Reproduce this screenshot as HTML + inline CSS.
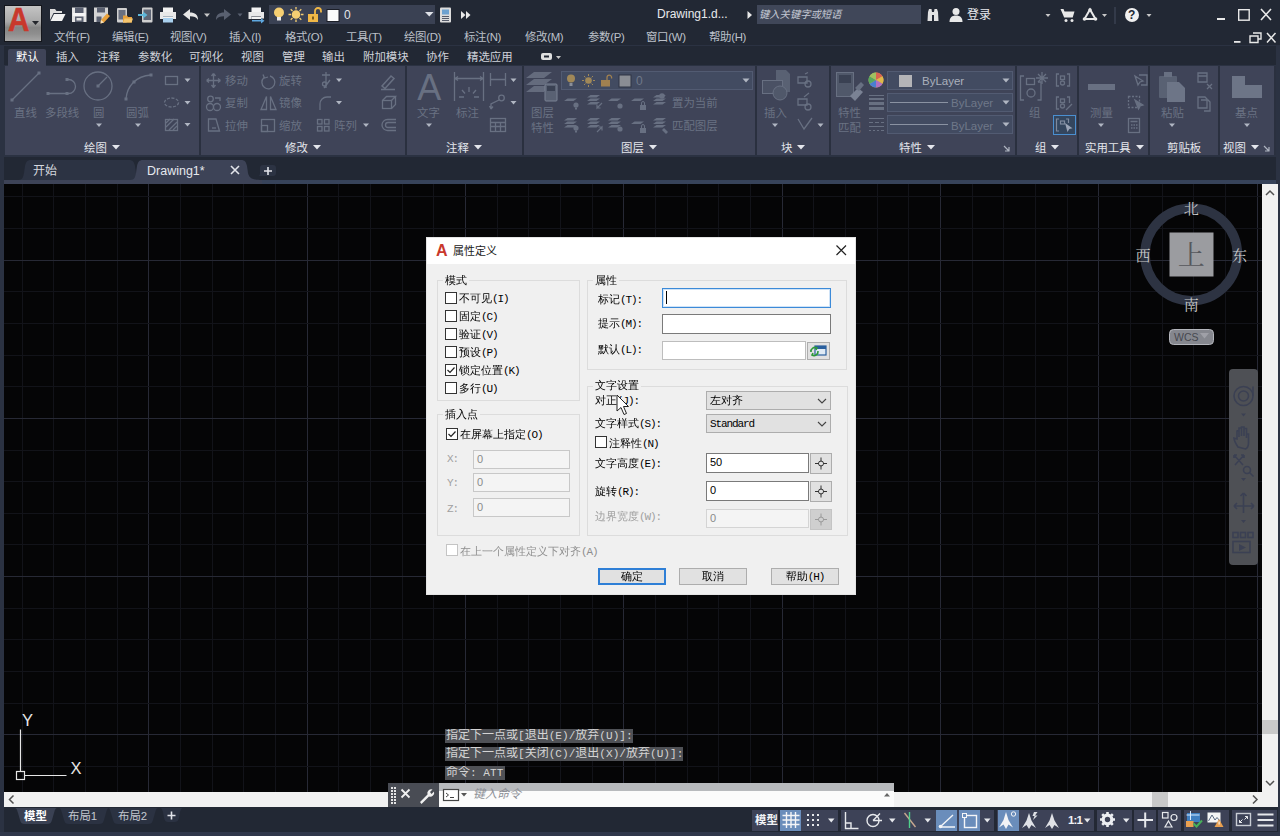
<!DOCTYPE html>
<html lang="zh-CN">
<head>
<meta charset="utf-8">
<title>Drawing1.dwg</title>
<style>
*{box-sizing:border-box;margin:0;padding:0}
html,body{width:1280px;height:836px;overflow:hidden;background:#222834}
body{position:relative;font-family:"Liberation Sans","Noto Sans CJK SC",sans-serif;font-size:12px;color:#e6e8ee;line-height:1}
.a{position:absolute}
.t{position:absolute;white-space:nowrap;line-height:14px;height:14px}
svg{position:absolute;overflow:visible}
#top{left:0;top:0;width:1280px;height:184px;background:#222834}
#ribbon{left:5px;top:66px;width:1270px;height:89px;background:#3f4458}
.pdiv{position:absolute;top:66px;width:2px;height:89px;background:#2a303f}
.ptitle{position:absolute;top:141px;height:14px;line-height:14px;font-size:11.4px;color:#e4e6ec;white-space:nowrap}
.dim{color:#6a7283;font-size:11.4px}
.menu{top:30px;font-size:11.4px;color:#bcc0c9;letter-spacing:-0.3px}
.rtab{top:50px;font-size:11.4px;color:#d0d3da}
#canvas{left:4px;top:184px;width:1258px;height:608px;background:#050506;overflow:hidden}
#dlg{left:426px;top:237px;width:430px;height:358px;background:#f0f0f0;border:1px solid #e4e4e4;color:#000;font-family:"Liberation Sans","WenQuanYi Zen Hei","Noto Sans CJK SC",sans-serif;font-size:11px}
#dlg .t{color:#000;font-size:11px}
.grp{position:absolute;border:1px solid #dcdcdc}
.cb{position:absolute;width:12px;height:12px;border:1px solid #333;background:#fff}
.inp{position:absolute;background:#fff;border:1px solid #7a7a7a;font-family:"Liberation Sans",sans-serif;font-size:11px;color:#000;padding:1px 0 0 3px;line-height:14px}
.btn{position:absolute;background:#e1e1e1;border:1px solid #adadad;text-align:center;font-size:11px;line-height:15px}
.l{font-family:"Liberation Mono",monospace;letter-spacing:-1.1px;font-size:11px}
.cmd{background:#4f5156;color:#d4d4d4;font-family:"Liberation Mono","Noto Sans CJK SC",monospace;font-size:12px;line-height:14px;white-space:nowrap;overflow:hidden;padding-left:1px}
.cl{font-size:11.1px}
</style>
</head>
<body>
<div id="top" class="a"></div>
<!-- window frame tint -->
<div class="a" style="left:0;top:45px;width:1280px;height:139px;background:#2b3242"></div>
<div class="a" style="left:4px;top:46px;width:1272px;height:19px;background:#222834"></div>
<div class="a" style="left:4px;top:157px;width:1272px;height:27px;background:#222834"></div>
<!-- app button -->
<div class="a" style="left:4px;top:5px;width:38px;height:37px;background:linear-gradient(#c4c4c4 0%,#a9a9a9 45%,#858585 62%,#8f8f8f 80%,#a5a5a5 100%);border:1px solid #14161c"></div>
<div class="t" style="left:8px;top:1.5px;height:34px;line-height:34px;font-size:34px;font-weight:bold;color:#c9382c;-webkit-text-stroke:0.6px #c9382c;font-family:'Liberation Sans',sans-serif;transform:scaleX(.87);transform-origin:left">A</div>
<svg style="left:32px;top:21px" width="8" height="5" viewBox="0 0 8 5"><path d="M0 0h7l-3.500 4z" fill="#23252b"/></svg>
<!-- QAT icons -->
<svg style="left:49px;top:7px" width="220" height="16" viewBox="0 0 220 16">
 <!-- open folder -->
 <path d="M1 2h5l1.5 2H13v2H4.5L1 13z" fill="#dcdcdc"/><path d="M5 7h11.5l-3.5 7H1.5z" fill="#f2f2f2"/>
 <!-- save -->
 <path d="M23 0.5h14.5v14.5H23z" fill="#e4e4e4"/><rect x="26" y="0.500" width="8.500" height="5.500" fill="#5a6070"/><rect x="26" y="9.500" width="8.500" height="5.500" fill="#5a6070"/><rect x="27.500" y="11" width="5" height="2.500" fill="#e4e4e4"/><rect x="24" y="6" width="12.500" height="3" fill="#f6f6f6"/>
 <!-- save as -->
 <path d="M45 0.5h14v10l-5 4.500H45z" fill="#d4d4d4"/><rect x="48" y="0.500" width="8" height="5" fill="#5a6070"/><rect x="47.500" y="9.500" width="5" height="5.500" fill="#5a6070"/><path d="M52 13l6-6.500 3 2.500-6 6.500-3.500 1z" fill="#e9a13b"/><path d="M52 13l3 2.500-3.500 1z" fill="#f5e2c0"/>
 <!-- mobile folder -->
 <rect x="68" y="1" width="10" height="14.500" rx="1" fill="#cfcfcf"/><rect x="69.500" y="3" width="7" height="9.500" fill="#6a7080"/><path d="M74 8.500h4l1 1.500h4v5.500h-9z" fill="#e9a13b"/><path d="M75.500 11.500h8.500l-1.500 4h-8.500z" fill="#f4c56e"/>
 <!-- mobile arrow -->
 <rect x="93" y="0.500" width="10.500" height="15" rx="1" fill="#cfcfcf"/><rect x="94.500" y="2.500" width="7.500" height="10.500" fill="#5f6676"/><path d="M89 7h5V4.500l4.500 3.500-4.500 3.500V9h-5z" fill="#5fb6d8"/>
 <!-- print -->
 <rect x="114" y="0.500" width="10" height="4.500" fill="#f2f2f2"/><path d="M111 5h16v7h-3V9h-10v3h-3z" fill="#e8e8e8"/><rect x="114" y="9.500" width="10" height="6" fill="#a9d0ee"/><rect x="114" y="9.500" width="10" height="1.500" fill="#f2f2f2"/>
 <!-- undo -->
 <path d="M134 7.500l7-5.500v3.500c5 0 8 2 8 7.500-1.500-3-4-3.800-8-3.800V13z" fill="#e6e6e6"/>
 <path d="M155 6.500h6l-3 3.500z" fill="#c8c8c8"/>
 <!-- redo dim -->
 <path d="M182 7.500l-7-5.500v3.500c-5 0-8 2-8 7.500 1.500-3 4-3.800 8-3.800V13z" fill="#596070"/>
 <path d="M188.500 6.500h5l-2.500 3z" fill="#596070"/>
 <!-- plot -->
 <rect x="202.500" y="0.500" width="9.500" height="4.500" fill="#f2f2f2"/><path d="M199.500 5h15.500v6.500h-3V9h-9.500v3h-3z" fill="#e8e8e8"/><rect x="202.500" y="9.500" width="9.500" height="2.500" fill="#f2f2f2"/><path d="M203 13h9v-1.800l3.500 2.600-3.500 2.600V14.600h-9z" fill="#5fa8e0"/>
</svg>
<!-- layer combo -->
<div class="a" style="left:269px;top:5px;width:166px;height:19px;background:#3a4153"></div>
<svg style="left:272px;top:6px" width="72" height="17" viewBox="0 0 72 17">
 <circle cx="7" cy="6.500" r="5" fill="#f6cf72"/><rect x="5" y="11" width="4" height="3.500" fill="#e8e8e8"/>
 <circle cx="24" cy="8.500" r="4.300" fill="#f6cf72"/><g stroke="#f6cf72" stroke-width="1.300"><path d="M24 1v2.500M24 13.500V16M16.500 8.500H19M29 8.500h2.500M18.700 3.200l1.800 1.800M27.500 12l1.800 1.800M18.700 13.800l1.800-1.800M27.500 5l1.800-1.800"/></g>
 <rect x="36" y="8" width="10" height="8" fill="#f0b847"/><path d="M43 8V5a3 3 0 0 1 6 0v1.500" fill="none" stroke="#f0b847" stroke-width="1.800"/><rect x="40" y="10.500" width="2" height="3" fill="#7a5a1c"/>
 <rect x="55" y="3.500" width="12" height="12" fill="#fbfbfb" stroke="#1c1f28" stroke-width="1"/>
</svg>
<div class="t" style="left:344px;top:8px;font-size:12px;color:#e4e6ea">0</div>
<svg style="left:425px;top:12px" width="9" height="5" viewBox="0 0 9 5"><path d="M0 0h8.500l-4.200 4.500z" fill="#dfe2e8"/></svg>
<svg style="left:439px;top:7px" width="34" height="16" viewBox="0 0 34 16">
 <rect x="1" y="0.500" width="11" height="15" rx="1" fill="#dcdcdc"/><rect x="3" y="2.500" width="7" height="5" fill="#6ea2d0"/><path d="M3 9.500h7M3 11.500h7M3 13.500h7" stroke="#555b6a" stroke-width="1"/>
 <path d="M22 4l4.500 4-4.500 4zM27 4l4.500 4-4.500 4z" fill="#e8e8e8"/>
</svg>
<!-- title -->
<div class="t" style="left:657px;top:7px;font-size:12px;color:#e8eaee">Drawing1.d...</div>
<svg style="left:747px;top:11px" width="6" height="8" viewBox="0 0 6 8"><path d="M0.500 0l4.500 4-4.500 4z" fill="#e8e8e8"/></svg>
<div class="a" style="left:757px;top:5px;width:164px;height:19px;background:#404759"></div>
<div class="t" style="left:759px;top:8px;font-size:10.300px;font-style:italic;color:#c4c9d4">键入关键字或短语</div>
<svg style="left:926px;top:7px" width="44" height="16" viewBox="0 0 44 16">
 <path d="M2 5l1-3h2.500l0.500 3v9H1.500zM8 5l0.500-3h2.500l1 3 0.500 9H8z" fill="#e2e2e2"/><rect x="6" y="5" width="2" height="3" fill="#e2e2e2"/>
 <circle cx="30" cy="4.500" r="3.500" fill="#e8e8e8"/><path d="M23.500 15c0-4.500 2.500-6.500 6.500-6.500s6.500 2 6.500 6.500z" fill="#e8e8e8"/>
</svg>
<div class="t" style="left:967px;top:8px;font-size:12px;color:#e8eaee">登录</div>
<svg style="left:1044px;top:7px" width="112" height="17" viewBox="0 0 112 17">
 <path d="M1.500 7h5l-2.500 3z" fill="#c8c8c8"/>
 <path d="M16.500 2h3l1 2.500h10l-1.800 6h-8.500z" fill="#e8e8e8"/><circle cx="22" cy="13.500" r="1.500" fill="#e8e8e8"/><circle cx="28" cy="13.500" r="1.500" fill="#e8e8e8"/>
 <path d="M46 2.500l5.500 9.500h-11z" fill="none" stroke="#e8e8e8" stroke-width="2"/><circle cx="46" cy="3" r="1.800" fill="#e8e8e8"/><circle cx="40.500" cy="12" r="1.800" fill="#e8e8e8"/><circle cx="51.500" cy="12" r="1.800" fill="#e8e8e8"/>
 <path d="M58 7h5l-2.500 3z" fill="#c8c8c8"/>
 <rect x="70.500" y="0" width="1" height="17" fill="#454c5e"/>
 <circle cx="88" cy="8" r="7" fill="#f0f0f0"/>
 <path d="M102.500 7h5l-2.500 3z" fill="#c8c8c8"/>
</svg>
<div class="t" style="left:1128px;top:8px;font-size:12px;font-weight:bold;color:#222834;font-family:'Liberation Sans',sans-serif">?</div>
<svg style="left:1214px;top:6px" width="64" height="40" viewBox="0 0 64 40">
 <rect x="3" y="12" width="8" height="2" fill="#e8e8e8"/>
 <rect x="24.700" y="3.700" width="10.500" height="10.500" fill="none" stroke="#e8e8e8" stroke-width="1.400"/>
 <path d="M47 3l10 11M57 3L47 14" stroke="#e8e8e8" stroke-width="1.600"/>
 <rect x="20" y="35" width="6.500" height="1.800" fill="#e8e8e8"/>
 <path d="M39 27h8v6h-3M36 30h8v6.500h-8z" fill="none" stroke="#e8e8e8" stroke-width="1.400"/>
 <path d="M53 27l8.500 9.500M61.500 27L53 36.500" stroke="#e8e8e8" stroke-width="1.500"/>
</svg>
<!-- menu bar -->
<div class="t menu" style="left:54px">文件(F)</div>
<div class="t menu" style="left:112px">编辑(E)</div>
<div class="t menu" style="left:170px">视图(V)</div>
<div class="t menu" style="left:229px">插入(I)</div>
<div class="t menu" style="left:285px">格式(O)</div>
<div class="t menu" style="left:346px">工具(T)</div>
<div class="t menu" style="left:404px">绘图(D)</div>
<div class="t menu" style="left:464px">标注(N)</div>
<div class="t menu" style="left:525px">修改(M)</div>
<div class="t menu" style="left:588px">参数(P)</div>
<div class="t menu" style="left:646px">窗口(W)</div>
<div class="t menu" style="left:709px">帮助(H)</div>
<!-- ribbon tabs -->
<div class="a" style="left:8px;top:49px;width:38px;height:17px;background:#3f4458;border-radius:2px 2px 0 0"></div>
<div class="t rtab" style="left:16px;color:#fff">默认</div>
<div class="t rtab" style="left:56px">插入</div>
<div class="t rtab" style="left:97px">注释</div>
<div class="t rtab" style="left:138px">参数化</div>
<div class="t rtab" style="left:189px">可视化</div>
<div class="t rtab" style="left:241px">视图</div>
<div class="t rtab" style="left:282px">管理</div>
<div class="t rtab" style="left:322px">输出</div>
<div class="t rtab" style="left:363px">附加模块</div>
<div class="t rtab" style="left:426px">协作</div>
<div class="t rtab" style="left:467px">精选应用</div>
<svg style="left:540px;top:52px" width="24" height="10" viewBox="0 0 24 10"><rect x="1" y="1" width="11" height="7" rx="2" fill="#e0e0e0"/><rect x="4" y="3.500" width="5" height="2" fill="#222834"/><path d="M16 4h5l-2.500 3z" fill="#c8c8c8"/></svg>

<div id="ribbon" class="a"></div>
<div class="pdiv" style="left:199px"></div><div class="pdiv" style="left:405px"></div><div class="pdiv" style="left:522px"></div><div class="pdiv" style="left:755px"></div><div class="pdiv" style="left:829px"></div><div class="pdiv" style="left:1015px"></div><div class="pdiv" style="left:1077px"></div><div class="pdiv" style="left:1148px"></div><div class="pdiv" style="left:1218px"></div><div class="pdiv" style="left:1274px;width:2px"></div>

<!-- panel titles -->
<div class="ptitle" style="left:84px">绘图<svg style="position:relative;display:inline-block;margin-left:5px;top:-2px" width="8" height="5" viewBox="0 0 8 5"><path d="M0 0h8l-4 4.500z" fill="#e4e6ec"/></svg></div>
<div class="ptitle" style="left:285px">修改<svg style="position:relative;display:inline-block;margin-left:5px;top:-2px" width="8" height="5" viewBox="0 0 8 5"><path d="M0 0h8l-4 4.500z" fill="#e4e6ec"/></svg></div>
<div class="ptitle" style="left:446px">注释<svg style="position:relative;display:inline-block;margin-left:5px;top:-2px" width="8" height="5" viewBox="0 0 8 5"><path d="M0 0h8l-4 4.500z" fill="#e4e6ec"/></svg></div>
<div class="ptitle" style="left:621px">图层<svg style="position:relative;display:inline-block;margin-left:5px;top:-2px" width="8" height="5" viewBox="0 0 8 5"><path d="M0 0h8l-4 4.500z" fill="#e4e6ec"/></svg></div>
<div class="ptitle" style="left:781px">块<svg style="position:relative;display:inline-block;margin-left:5px;top:-2px" width="8" height="5" viewBox="0 0 8 5"><path d="M0 0h8l-4 4.500z" fill="#e4e6ec"/></svg></div>
<div class="ptitle" style="left:899px">特性<svg style="position:relative;display:inline-block;margin-left:5px;top:-2px" width="8" height="5" viewBox="0 0 8 5"><path d="M0 0h8l-4 4.500z" fill="#e4e6ec"/></svg></div>
<div class="ptitle" style="left:1035px">组<svg style="position:relative;display:inline-block;margin-left:5px;top:-2px" width="8" height="5" viewBox="0 0 8 5"><path d="M0 0h8l-4 4.500z" fill="#e4e6ec"/></svg></div>
<div class="ptitle" style="left:1085px">实用工具<svg style="position:relative;display:inline-block;margin-left:5px;top:-2px" width="8" height="5" viewBox="0 0 8 5"><path d="M0 0h8l-4 4.500z" fill="#e4e6ec"/></svg></div>
<div class="ptitle" style="left:1167px">剪贴板</div>
<div class="ptitle" style="left:1223px">视图<svg style="position:relative;display:inline-block;margin-left:5px;top:-2px" width="8" height="5" viewBox="0 0 8 5"><path d="M0 0h8l-4 4.500z" fill="#e4e6ec"/></svg></div>
<svg style="left:1003px;top:145px" width="270" height="8" viewBox="0 0 270 8"><path d="M1 1l5 5M6 2v4H2" stroke="#aeb4c0" stroke-width="1.200" fill="none"/><path d="M261 1l5 5M266 2v4h-4" stroke="#aeb4c0" stroke-width="1.200" fill="none"/></svg>
<!-- dim labels -->
<div class="t dim" style="left:14px;top:106px">直线</div>
<div class="t dim" style="left:45px;top:106px">多段线</div>
<div class="t dim" style="left:93px;top:106px">圆</div>
<div class="t dim" style="left:126px;top:106px">圆弧</div>
<div class="t dim" style="left:225px;top:74px">移动</div>
<div class="t dim" style="left:225px;top:96px">复制</div>
<div class="t dim" style="left:225px;top:119px">拉伸</div>
<div class="t dim" style="left:279px;top:74px">旋转</div>
<div class="t dim" style="left:279px;top:96px">镜像</div>
<div class="t dim" style="left:279px;top:119px">缩放</div>
<div class="t dim" style="left:334px;top:119px">阵列</div>
<div class="t dim" style="left:417px;top:106px">文字</div>
<div class="t dim" style="left:456px;top:106px">标注</div>
<div class="t dim" style="left:531px;top:106px">图层</div>
<div class="t dim" style="left:531px;top:121px">特性</div>
<div class="t dim" style="left:672px;top:96px">置为当前</div>
<div class="t dim" style="left:672px;top:119px">匹配图层</div>
<div class="t dim" style="left:764px;top:106px">插入</div>
<div class="t dim" style="left:838px;top:106px">特性</div>
<div class="t dim" style="left:838px;top:121px">匹配</div>
<div class="t dim" style="left:1029px;top:106px">组</div>
<div class="t dim" style="left:1090px;top:106px">测量</div>
<div class="t dim" style="left:1161px;top:106px">粘贴</div>
<div class="t dim" style="left:1235px;top:106px">基点</div>
<!-- combos -->
<div class="a" style="left:561px;top:71px;width:192px;height:19px;background:#424b61;border:1px solid #525b72"></div>
<div class="t" style="left:636px;top:74px;color:#6f7889">0</div>
<div class="a" style="left:887px;top:71px;width:126px;height:19px;background:#424b61;border:1px solid #525b72"></div>
<div class="a" style="left:887px;top:93px;width:126px;height:19px;background:#424b61;border:1px solid #525b72"></div>
<div class="a" style="left:887px;top:115px;width:126px;height:19px;background:#424b61;border:1px solid #525b72"></div>
<div class="a" style="left:899px;top:75px;width:13px;height:12px;background:#b4b4b7"></div>
<div class="t" style="left:922px;top:74px;font-size:11.500px;color:#aab0bc">ByLayer</div>
<div class="a" style="left:890px;top:102px;width:58px;height:1px;background:#8a92a2"></div>
<div class="t" style="left:951px;top:96px;font-size:11.500px;color:#6f7889">ByLayer</div>
<div class="a" style="left:890px;top:124px;width:58px;height:1px;background:#8a92a2"></div>
<div class="t" style="left:951px;top:119px;font-size:11.500px;color:#6f7889">ByLayer</div>

<svg style="left:0;top:65px" width="1280" height="92" viewBox="0 65 1280 92">
<g fill="none" stroke="#687082" stroke-width="1.300">
 <!-- draw panel -->
 <path d="M12 100l27-27"/><rect x="10.500" y="98.500" width="3" height="3" fill="#687082" stroke="none"/><rect x="37.500" y="71.500" width="3" height="3" fill="#687082" stroke="none"/>
 <path d="M48 93.500h19M67 79.500h1.500a7 7 0 0 1 0 14H67"/><rect x="46.500" y="92" width="3" height="3" fill="#687082" stroke="none"/><rect x="65.500" y="92" width="3" height="3" fill="#687082" stroke="none"/><rect x="65.500" y="78" width="3" height="3" fill="#687082" stroke="none"/>
 <circle cx="98" cy="86" r="14"/><path d="M98 86l9-9"/><rect x="96.500" y="84.500" width="3" height="3" fill="#687082" stroke="none"/>
 <path d="M126 99c1-13 10-23 25-24"/><rect x="124.500" y="97.500" width="3" height="3" fill="#687082" stroke="none"/><rect x="149.500" y="73.500" width="3" height="3" fill="#687082" stroke="none"/><rect x="132.500" y="80.500" width="3" height="3" fill="#687082" stroke="none"/>
 <rect x="165.500" y="76.500" width="12" height="8"/><ellipse cx="171.500" cy="102.500" rx="7" ry="4.500" stroke-dasharray="3 1.500"/><rect x="165.500" y="119.500" width="12" height="11"/><path d="M166 127l8-8M169 130l8-8M166 123l4-4M173 130l4-4"/>
 <!-- modify panel -->
 <path d="M213.500 73.500v14M206.500 80.500h14M213.500 73.500l-2 2.500M213.500 73.500l2 2.500M213.500 87.500l-2-2.500M213.500 87.500l2-2.500M206.500 80.500l2.500-2M206.500 80.500l2.500 2M220.500 80.500l-2.500-2M220.500 80.500l-2.500 2"/>
 <circle cx="210.500" cy="99" r="2.800"/><circle cx="210" cy="107" r="3.500"/><circle cx="217" cy="107" r="3.500"/><path d="M215 98h5v3"/>
 <path d="M208.500 119v12h11l-3.500-12z"/><path d="M212 128h4"/>
 <path d="M270 76a6.500 6.500 0 1 1-6 1.500M263 74.500l1.500 3.500 3.500-1"/>
 <path d="M266.500 109.500v-13l-5.500 13zM270.500 109.500v-13l5.500 13z"/>
 <rect x="261.500" y="119.500" width="13" height="12"/><rect x="261.500" y="125.500" width="6" height="6"/>
 <path d="M322 75h8M326 72v16M324 88l6-8"/><circle cx="324.500" cy="84" r="2"/>
 <path d="M320 110v-6a7 7 0 0 1 7-7h4"/>
 <rect x="317.500" y="119.500" width="4.500" height="4.500"/><rect x="324.500" y="119.500" width="4.500" height="4.500"/><rect x="317.500" y="126.500" width="4.500" height="4.500"/><rect x="324.500" y="126.500" width="4.500" height="4.500"/>
 <path d="M382 86l9-10 3 2.500-9 10zM381 89.500h14" stroke-width="1.500"/>
 <rect x="382.500" y="100.500" width="9" height="8"/><path d="M382.500 100.500l4-4h9l-4 4M395.500 96.500v8l-4 4"/>
 <path d="M396 119.500h-8.500a5.500 5.500 0 0 0 0 11h8.500M396 122.500h-8a2.500 2.500 0 0 0 0 5h8"/>
 <!-- annotate -->
 <path d="M454.500 72v29M483.500 72v29M455 78.500h28M455 78.500l3-2M455 78.500l3 2M483 78.500l-3-2M483 78.500l-3 2"/>
 <path d="M469 87v5M462 90l3 3.500M476 90l-3 3.500M459 97h5M474 97h5"/>
 <path d="M490.500 73v13M505.500 73v13M491 79.500h14"/>
 <circle cx="501.500" cy="98" r="2.800"/><path d="M499 100l-8 4v5M491 109l-1.500-3M491 109l2-2.500"/>
 <rect x="490.500" y="118.500" width="15" height="13"/><path d="M490.500 122.500h15M490.500 126.500h15M495.500 122.500v9M500.500 122.500v9"/>
 <!-- block small icons -->
 <path d="M798 77h9v6h-9zM805 74l3-1.500"/><circle cx="808" cy="84" r="3"/>
 <path d="M798 99h9v6h-9z"/><circle cx="808" cy="107" r="3"/><path d="M804 97l5-4"/>
 <path d="M798 119l6 10 8-11"/>
 <!-- group panel -->
 <path d="M1024 76h-3.500v24h3.500M1038 82h3v18h-3.500"/><rect x="1026.500" y="78.500" width="8" height="6"/><circle cx="1031" cy="93" r="4"/>
 <path d="M1042 72v12M1036 78h12M1038 74l8 8M1046 74l-8 8"/>
 <path d="M1059 74h-2.500v12h2.500M1067 74h2.500v12h-2.500"/><rect x="1060.500" y="76" width="4" height="3.500"/><circle cx="1062.500" cy="83" r="2"/>
 <path d="M1059 97h-2.500v12h2.500M1067 97h2.500v6"/><rect x="1060.500" y="99" width="4" height="3.500"/><circle cx="1062.500" cy="106" r="2"/><path d="M1066 110l6-6"/>
 <!-- utilities -->
 <path d="M1135 76l3 9 2-3 3-1zM1139 75h8v10h-6"/>
 <rect x="1128.500" y="96.500" width="11" height="11" stroke-dasharray="2 1.500"/><path d="M1135 100l3.500 9 1.500-3 3-1z" fill="#687082"/>
 <rect x="1128.500" y="118.500" width="11" height="14"/><path d="M1130.500 121.500h7M1131 125h1.500M1133.500 125h1.500M1136 125h1.500M1131 128h1.500M1133.500 128h1.500M1136 128h1.500"/>
 <!-- clipboard small -->
 <path d="M1198 73h9v9h-9zM1198 76h9M1207 84l5 5M1212 84l-5 5"/>
 <path d="M1198 97h7l2 2v9h-9zM1201 100h7l2 2v9h-6"/>
</g>
<g fill="#687082">
 <!-- big A -->
 <text x="429.300" y="100" text-anchor="middle" font-family="'Liberation Sans',sans-serif" font-size="36" fill="#687082">A</text>
 <!-- layer big icon -->
 <path d="M534 72h18l-8 6h-18zM534 79h18l-8 6h-18zM534 86h14l-4 6h-18z" opacity="0.900"/><rect x="545" y="84" width="12" height="17" rx="1" fill="#596173" stroke="#7a8294"/><rect x="547" y="86" width="8" height="5" fill="#3a4153"/>
 <!-- layer small icons -->
 <path d="M567.5 98.5h9.500l-3.500 2.600h-9.500zM590.5 95.0h9.500l-3.500 2.600h-9.500zM590.5 98.5h9.500l-3.500 2.600h-9.500zM590.5 102.0h9.500l-3.500 2.600h-9.500zM611.5 98.5h9.500l-3.500 2.600h-9.500zM634.5 98.5h9.500l-3.500 2.600h-9.500zM656.5 95.0h9.500l-3.500 2.600h-9.500zM656.5 98.5h9.500l-3.500 2.600h-9.500zM656.5 102.0h9.500l-3.500 2.600h-9.500zM567.5 118.0h9.500l-3.500 2.600h-9.500zM567.5 121.5h9.500l-3.500 2.600h-9.500zM567.5 125.0h9.500l-3.500 2.600h-9.500zM590.5 118.0h9.500l-3.500 2.600h-9.500zM590.5 121.5h9.500l-3.500 2.600h-9.500zM590.5 125.0h9.500l-3.500 2.600h-9.500zM611.5 118.0h9.500l-3.500 2.600h-9.500zM611.5 121.5h9.500l-3.500 2.600h-9.500zM611.5 125.0h9.500l-3.500 2.600h-9.500zM634.5 121.5h9.500l-3.500 2.600h-9.500zM656.5 118.0h9.500l-3.500 2.600h-9.500zM656.5 121.5h9.500l-3.500 2.600h-9.500zM656.5 125.0h9.500l-3.500 2.600h-9.500z"/>
 <circle cx="576" cy="105" r="2.600"/><rect x="575" y="107.5" width="2" height="2"/><path d="M602 103l-5 5v-3.500M597 108h3.500" stroke="#687082" stroke-width="1.200" fill="none"/><circle cx="620" cy="106" r="2.600"/><rect x="640" y="105" width="6" height="5"/><path d="M641.5 105v-2a1.500 1.500 0 0 1 3 0v2" stroke="#687082" stroke-width="1" fill="none"/><circle cx="662" cy="96" r="2.800"/><circle cx="576" cy="128" r="2.600"/><rect x="575" y="130.5" width="2" height="2"/><path d="M597 132l5-5v3.500M602 127h-3.500" stroke="#687082" stroke-width="1.200" fill="none"/><circle cx="620" cy="129" r="2.600"/><rect x="640" y="128" width="6" height="5"/><path d="M641.5 128v-2a1.500 1.500 0 0 1 3 0v2" stroke="#687082" stroke-width="1" fill="none"/><path d="M664 128l4 4-2 2-4-4z"/>
 <!-- layer combo icons -->
 <circle cx="571" cy="78.500" r="4" fill="#a08858"/><rect x="569.500" y="83" width="3" height="3" fill="#8a8f9a"/><circle cx="588.500" cy="80.500" r="3.300" fill="#a08858"/><path d="M588.500 74v2M588.500 85v2M582 80.500h2M593 80.500h2M584 76l1.400 1.400M591.600 83.600l1.400 1.400M584 85l1.400-1.400M591.600 77.400l1.400-1.400" stroke="#a08858" stroke-width="1" fill="none"/><rect x="601" y="80" width="9" height="6.500" fill="#a08050"/><path d="M607 80v-2.500a2.300 2.300 0 0 1 4.600 0v1" stroke="#a08050" stroke-width="1.300" fill="none"/><rect x="619" y="75" width="12" height="12" fill="#8a8d94" stroke="#2e3444" stroke-width="1"/>
 <path d="M742.500 78.500h7l-3.500 4zM1002.500 78.500h7l-3.500 4z" fill="#b0b6c2"/><path d="M1002.500 100.500h7l-3.500 4zM1002.500 122.500h7l-3.500 4z" fill="#b0b6c2"/>
 <!-- insert big icon -->
 <path d="M776 70h10l4 4v18h-14z" fill="#596173"/><rect x="762.500" y="80.500" width="20" height="13" fill="#4a5164" stroke="#687082"/><circle cx="780" cy="93" r="7" fill="#50586a" stroke="#687082"/>
 <!-- match prop -->
 <rect x="836.500" y="72.500" width="17" height="24" fill="#50586a" stroke="#687082"/><rect x="839" y="75" width="12" height="8" fill="#3a4153"/><path d="M850 96l8-8 5 4-8 9z" fill="#7a8294"/><path d="M855 88l6-6 3 3-5 6z"/>
 <!-- lineweight / linetype icons -->
 <rect x="869" y="95" width="15" height="1"/><rect x="869" y="98" width="15" height="2"/><rect x="869" y="102" width="15" height="3"/><rect x="869" y="107" width="15" height="3"/>
 <path d="M869 118h15v1h-15zM869 122h4v1h-4zM875 122h4v1h-4zM881 122h3v1h-3zM869 126h15v1h-15zM869 130h2v1h-2zM873 130h2v1h-2zM877 130h2v1h-2zM881 130h3v1h-3z"/>
 <!-- measure ruler -->
 <rect x="1088" y="84" width="27" height="6"/>
 <!-- paste -->
 <rect x="1159" y="76" width="18" height="22" rx="1" fill="#596173"/><rect x="1164" y="72" width="8" height="5" fill="#687082"/><path d="M1167 82h12l6 6v14h-18z" fill="#6d7587"/>
 <!-- base view -->
 <path d="M1232 76h13v9h17v13h-30z" fill="#6d7587"/>
 <!-- carets -->
 <path d="M184.500 78.500h6l-3 3.500zM184.500 101h6l-3 3.500zM184.500 123h6l-3 3.500zM96 123.500h6l-3 3.500zM135 123.500h6l-3 3.500zM336 78.500h6l-3 3.500zM336 101h6l-3 3.500zM363 123.500h6l-3 3.500zM426 123.500h6l-3 3.500zM510.500 78.500h6l-3 3.500zM510.500 101h6l-3 3.500zM772 123.500h6l-3 3.500zM817.500 123.500h6l-3 3.500zM1098 123.500h6l-3 3.500zM1169 123.500h6l-3 3.500zM1244 123.500h6l-3 3.500z" fill="#b0b6c2"/>
</g>
<!-- color wheel -->
<g transform="translate(876 80)"><circle r="7.500" fill="#c9a050"/><path d="M0 0L0-7.500A7.500 7.500 0 0 1 6.500-3.700z" fill="#d9634f"/><path d="M0 0L6.500-3.700A7.500 7.500 0 0 1 6.500 3.700z" fill="#e0b84a"/><path d="M0 0L6.500 3.700A7.500 7.500 0 0 1 0 7.500z" fill="#b070c0"/><path d="M0 0L0 7.500A7.500 7.500 0 0 1-6.500 3.700z" fill="#4a7fd0"/><path d="M0 0L-6.500 3.700A7.500 7.500 0 0 1-6.500-3.700z" fill="#55a860"/><path d="M0 0L-6.500-3.700A7.500 7.500 0 0 1 0-7.500z" fill="#a0c060"/></g>
<!-- highlighted group button -->
<rect x="1053.500" y="115.500" width="22" height="19" fill="#34465e" stroke="#4a8fd0" stroke-width="1"/>
<g fill="none" stroke="#7f8a9e" stroke-width="1.200"><path d="M1059 119h-2.500v12h2.500M1066 119h2.500v4"/><rect x="1060.500" y="121" width="4" height="3"/></g><path d="M1065 123l2.500 9 1.800-3 3.200-.8z" fill="#9aa4b6"/>
</svg>

<!-- file tabs -->
<svg style="left:0;top:157px" width="300" height="27" viewBox="0 0 300 27">
 <path d="M18 23c5 0 5-3 6-7l1-7c1-4 2-6 6-6h98c4 0 5 2 6 6l1 7c1 4 1 7 6 7z" fill="#2c3343"/>
 <path d="M130 23c5 0 5-3 6-7l1-7c1-4 2-6 6-6h98c4 0 5 2 6 6l1 7c1 4 3 7 12 7z" fill="#3d4357"/>
 <path d="M258 19c2 0 2-2 2-4v-4c0-2 1-3 3-3h10c2 0 3 1 3 3v5c0 2-1 3-3 3z" fill="#2c3343"/>
 <path d="M231 9l8 8M239 9l-8 8" stroke="#e2e4ea" stroke-width="1.600"/>
 <path d="M264 14h8M268 10v8" stroke="#e2e4ea" stroke-width="1.600"/>
</svg>
<div class="t" style="left:33px;top:164px;font-size:12px;color:#d4d7de">开始</div>
<div class="t" style="left:147px;top:164px;font-size:12.500px;color:#e6e8ee">Drawing1*</div>
<div class="a" style="left:4px;top:180px;width:1272px;height:4px;background:#37435a"></div><div class="a" style="left:4px;top:180px;width:258px;height:4px;background:#3d4357"></div>

<div id="canvas" class="a">
<svg class="a" style="left:0;top:0" width="1258" height="608" viewBox="0 0 1258 608" shape-rendering="crispEdges"><line x1="18.5" y1="0" x2="18.5" y2="608" stroke="#121319"/><line x1="49.5" y1="0" x2="49.5" y2="608" stroke="#121319"/><line x1="81.5" y1="0" x2="81.5" y2="608" stroke="#121319"/><line x1="113.5" y1="0" x2="113.5" y2="608" stroke="#121319"/><line x1="144.5" y1="0" x2="144.5" y2="608" stroke="#272935"/><line x1="176.5" y1="0" x2="176.5" y2="608" stroke="#121319"/><line x1="208.5" y1="0" x2="208.5" y2="608" stroke="#121319"/><line x1="239.5" y1="0" x2="239.5" y2="608" stroke="#121319"/><line x1="271.5" y1="0" x2="271.5" y2="608" stroke="#121319"/><line x1="303.5" y1="0" x2="303.5" y2="608" stroke="#272935"/><line x1="334.5" y1="0" x2="334.5" y2="608" stroke="#121319"/><line x1="366.5" y1="0" x2="366.5" y2="608" stroke="#121319"/><line x1="398.5" y1="0" x2="398.5" y2="608" stroke="#121319"/><line x1="429.5" y1="0" x2="429.5" y2="608" stroke="#121319"/><line x1="461.5" y1="0" x2="461.5" y2="608" stroke="#272935"/><line x1="493.5" y1="0" x2="493.5" y2="608" stroke="#121319"/><line x1="524.5" y1="0" x2="524.5" y2="608" stroke="#121319"/><line x1="556.5" y1="0" x2="556.5" y2="608" stroke="#121319"/><line x1="588.5" y1="0" x2="588.5" y2="608" stroke="#121319"/><line x1="619.5" y1="0" x2="619.5" y2="608" stroke="#272935"/><line x1="651.5" y1="0" x2="651.5" y2="608" stroke="#121319"/><line x1="683.5" y1="0" x2="683.5" y2="608" stroke="#121319"/><line x1="714.5" y1="0" x2="714.5" y2="608" stroke="#121319"/><line x1="746.5" y1="0" x2="746.5" y2="608" stroke="#121319"/><line x1="778.5" y1="0" x2="778.5" y2="608" stroke="#272935"/><line x1="809.5" y1="0" x2="809.5" y2="608" stroke="#121319"/><line x1="841.5" y1="0" x2="841.5" y2="608" stroke="#121319"/><line x1="873.5" y1="0" x2="873.5" y2="608" stroke="#121319"/><line x1="904.5" y1="0" x2="904.5" y2="608" stroke="#121319"/><line x1="936.5" y1="0" x2="936.5" y2="608" stroke="#272935"/><line x1="968.5" y1="0" x2="968.5" y2="608" stroke="#121319"/><line x1="999.5" y1="0" x2="999.5" y2="608" stroke="#121319"/><line x1="1031.5" y1="0" x2="1031.5" y2="608" stroke="#121319"/><line x1="1063.5" y1="0" x2="1063.5" y2="608" stroke="#121319"/><line x1="1094.5" y1="0" x2="1094.5" y2="608" stroke="#272935"/><line x1="1126.5" y1="0" x2="1126.5" y2="608" stroke="#121319"/><line x1="1158.5" y1="0" x2="1158.5" y2="608" stroke="#121319"/><line x1="1189.5" y1="0" x2="1189.5" y2="608" stroke="#121319"/><line x1="1221.5" y1="0" x2="1221.5" y2="608" stroke="#121319"/><line x1="1253.5" y1="0" x2="1253.5" y2="608" stroke="#272935"/><line x1="0" y1="12.5" x2="1258" y2="12.5" stroke="#121319"/><line x1="0" y1="44.5" x2="1258" y2="44.5" stroke="#121319"/><line x1="0" y1="76.5" x2="1258" y2="76.5" stroke="#272935"/><line x1="0" y1="107.5" x2="1258" y2="107.5" stroke="#121319"/><line x1="0" y1="139.5" x2="1258" y2="139.5" stroke="#121319"/><line x1="0" y1="171.5" x2="1258" y2="171.5" stroke="#121319"/><line x1="0" y1="202.5" x2="1258" y2="202.5" stroke="#121319"/><line x1="0" y1="234.5" x2="1258" y2="234.5" stroke="#272935"/><line x1="0" y1="266.5" x2="1258" y2="266.5" stroke="#121319"/><line x1="0" y1="297.5" x2="1258" y2="297.5" stroke="#121319"/><line x1="0" y1="329.5" x2="1258" y2="329.5" stroke="#121319"/><line x1="0" y1="360.5" x2="1258" y2="360.5" stroke="#121319"/><line x1="0" y1="392.5" x2="1258" y2="392.5" stroke="#272935"/><line x1="0" y1="424.5" x2="1258" y2="424.5" stroke="#121319"/><line x1="0" y1="455.5" x2="1258" y2="455.5" stroke="#121319"/><line x1="0" y1="487.5" x2="1258" y2="487.5" stroke="#121319"/><line x1="0" y1="519.5" x2="1258" y2="519.5" stroke="#121319"/><line x1="0" y1="550.5" x2="1258" y2="550.5" stroke="#272935"/><line x1="0" y1="582.5" x2="1258" y2="582.5" stroke="#121319"/></svg>
</div>

<!-- viewcube -->
<svg style="left:1130px;top:195px" width="125" height="155" viewBox="1130 195 125 155">
 <circle cx="1191.200" cy="254.500" r="46.200" fill="none" stroke="#2d3342" stroke-width="9.600"/>
 <rect x="1169.500" y="232.500" width="44" height="44" fill="#9b9ca0"/>
 <rect x="1169.500" y="329.500" width="44" height="15" rx="4" fill="#85878e" stroke="#b4b6bc" stroke-width="1"/>
 <g font-family="'Liberation Serif','Noto Serif CJK SC',serif" text-anchor="middle" fill="#c9c9c9" font-size="15">
  <text x="1191.200" y="213.500">北</text><text x="1143" y="260.500">西</text><text x="1239.500" y="260.500">东</text><text x="1191.200" y="309.500">南</text>
  <text x="1191.200" y="264.500" font-size="27" fill="#55575c">上</text>
 </g>
 <text x="1174" y="341" font-family="'Liberation Sans',sans-serif" font-size="10.500" fill="#45474e">WCS</text>
 <path d="M1200 333h9l-4.500 5.500z" fill="#a9abb2" opacity="0.700"/>
</svg>
<!-- nav bar -->
<div class="a" style="left:1229px;top:369px;width:29px;height:196px;background:#4e5055;border-radius:4px"></div>
<svg style="left:1229px;top:369px" width="29" height="196" viewBox="0 0 29 196">
 <g fill="none" stroke="#3b4053" stroke-width="1.600">
  <circle cx="14.500" cy="27" r="9.500"/><circle cx="14.500" cy="27" r="5"/><path d="M24 17.500V27"/>
  <path d="M9 78c-2-3-4-7-4-9l3 1V62l2-1v7-9h2.500v8-9H15v9-7.500h2.500V69v-4h2v9c0 3-1 5-3 6z"/>
  <path d="M5 86l9 10M15 86L6 96M5 86h3M5 86v3M15 86h-3M15 86v3"/><circle cx="18" cy="101" r="3.500"/><path d="M20.500 103.500l4 4"/>
  <path d="M14.500 124v20M5 137h20M14.500 124l-3 3M14.500 124l3 3M5 137l3-3M5 137l3 3M25 137l-3-3M25 137l-3 3"/>
  <rect x="4" y="163.500" width="5" height="5"/><rect x="11.500" y="163.500" width="5" height="5"/><rect x="19" y="163.500" width="5" height="5"/><rect x="4" y="172.500" width="17" height="11"/>
 </g>
 <path d="M12 44.500h5l-2.500 3zM12 109h5l-2.500 3zM12 151h5l-2.500 3z" fill="#3b4053"/>
 <path d="M10 175l7 3.500-7 3.500z" fill="#3b4053"/>
</svg>
<!-- UCS icon -->
<svg style="left:10px;top:705px" width="80" height="80" viewBox="10 705 80 80">
 <g fill="none" stroke="#e6e6e6" stroke-width="1.200">
 <rect x="16.500" y="771.500" width="8" height="8"/><path d="M20.500 771.500V729.500M24.500 775.500H66.500"/>
 </g>
 <text x="76" y="774" text-anchor="middle" font-family="'Liberation Sans',sans-serif" font-size="16.500" fill="#e6e6e6">X</text>
 <text x="27.500" y="725.500" text-anchor="middle" font-family="'Liberation Sans',sans-serif" font-size="16.500" fill="#e6e6e6">Y</text>
</svg>
<!-- command history -->
<div class="a cmd" style="left:445px;top:729px;width:188px;height:14px">指定下一点或<span class="cl">[</span>退出<span class="cl">(E)/</span>放弃<span class="cl">(U)]:</span></div>
<div class="a cmd" style="left:445px;top:747px;width:238px;height:14px">指定下一点或<span class="cl">[</span>关闭<span class="cl">(C)/</span>退出<span class="cl">(X)/</span>放弃<span class="cl">(U)]:</span></div>
<div class="a cmd" style="left:445px;top:766px;width:60px;height:14px">命令<span class="cl">: ATT</span></div>

<!-- scrollbars -->
<div class="a" style="left:1262px;top:184px;width:16px;height:623px;background:#f1f1f1"></div>
<div class="a" style="left:4px;top:792px;width:1274px;height:15px;background:#f1f1f1"></div>
<div class="a" style="left:1262px;top:720px;width:16px;height:14px;background:#c9c9c9"></div>
<div class="a" style="left:1152px;top:792px;width:16px;height:15px;background:#c9c9c9"></div>
<svg style="left:1262px;top:184px" width="16" height="623" viewBox="0 0 16 623"><path d="M4 11l4-4 4 4" stroke="#505050" stroke-width="1.500" fill="none"/><path d="M4 597l4 4 4-4" stroke="#505050" stroke-width="1.500" fill="none"/></svg>
<svg style="left:4px;top:792px" width="1258" height="15" viewBox="0 0 1258 15"><path d="M9.500 3.500l-4 4 4 4" stroke="#505050" stroke-width="1.500" fill="none"/><path d="M1249 3.500l4 4-4 4" stroke="#505050" stroke-width="1.500" fill="none"/></svg>
<!-- window border -->
<div class="a" style="left:0;top:184px;width:4px;height:652px;background:#2b3242"></div>
<div class="a" style="left:1278px;top:184px;width:2px;height:652px;background:#2b3242"></div>
<div class="a" style="left:0;top:832px;width:1280px;height:4px;background:#30374a"></div>
<!-- bottom bar -->
<div class="a" style="left:4px;top:807px;width:1274px;height:25px;background:#222834"></div>
<svg style="left:0;top:807px" width="200" height="20" viewBox="0 0 200 20">
 <path d="M14 1c3 0 3 2 4 5l2 7c1 3 2 4 5 4h22c3 0 4-1 5-4l2-7c1-3 1-5 4-5z" fill="#3a4153"/>
 <path d="M58 1c3 0 3 2 4 5l2 7c1 3 2 4 5 4h30c3 0 4-1 5-4l2-7c1-3 1-5 4-5z" fill="#2b3242"/>
 <path d="M107 1c3 0 3 2 4 5l2 7c1 3 2 4 5 4h30c3 0 4-1 5-4l2-7c1-3 1-5 4-5z" fill="#2b3242"/>
 <path d="M160 1c2 0 2 2 3 4l1 6c1 3 2 4 4 4h6c3 0 4-1 5-4l1-6c1-2 1-4 3-4z" fill="#2b3242"/>
 <path d="M167.500 8.500h8M171.500 4.500v8" stroke="#e2e4ea" stroke-width="1.600"/>
</svg>
<div class="t" style="left:24px;top:809px;font-size:11.400px;color:#fff;font-weight:bold">模型</div>
<div class="t" style="left:68px;top:809px;font-size:11.400px;color:#c4c8d0">布局1</div>
<div class="t" style="left:118px;top:809px;font-size:11.400px;color:#c4c8d0">布局2</div>

<!-- status bar -->
<div class="a" style="left:752px;top:810px;height:21px;background:#3d4257;width:525px"></div>
<div class="a" style="left:780px;top:810px;width:21px;height:21px;background:#6a8dbb"></div>
<div class="a" style="left:936px;top:810px;width:21px;height:21px;background:#6a8dbb"></div>
<div class="a" style="left:959px;top:810px;width:21px;height:21px;background:#6a8dbb"></div>
<div class="a" style="left:998px;top:810px;width:21px;height:21px;background:#6a8dbb"></div>
<div class="a" style="left:778px;top:810px;width:2px;height:21px;background:#232834"></div><div class="a" style="left:838px;top:810px;width:3px;height:21px;background:#232834"></div>
<div class="a" style="left:994px;top:810px;width:3px;height:21px;background:#232834"></div>
<div class="a" style="left:1094px;top:810px;width:3px;height:21px;background:#232834"></div>
<div class="a" style="left:1132px;top:810px;width:2px;height:21px;background:#232834"></div>
<div class="a" style="left:1156px;top:810px;width:2px;height:21px;background:#232834"></div>
<div class="a" style="left:1181px;top:810px;width:3px;height:21px;background:#232834"></div>
<div class="a" style="left:1229px;top:810px;width:3px;height:21px;background:#232834"></div>
<div class="t" style="left:755px;top:813px;font-size:11.400px;font-weight:bold;color:#f2f3f6">模型</div>
<div class="t" style="left:1068px;top:813px;font-size:11.400px;font-weight:bold;color:#f2f3f6;letter-spacing:-0.800px;font-family:'Liberation Sans',sans-serif">1:1</div>
<svg style="left:752px;top:808px" width="525" height="23" viewBox="752 808 525 23">
 <g stroke="#f4f5f7" stroke-width="1.400" fill="none">
  <path d="M786.500 812v16M791 812v16M795.500 812v16M782.500 815.500h17M782.500 820h17M782.500 824.500h17"/>
 </g>
 <g fill="#e6e8ec">
  <rect x="807" y="814" width="2" height="2"/><rect x="812" y="814" width="2" height="2"/><rect x="817" y="814" width="2" height="2"/>
  <rect x="807" y="819" width="2" height="2"/><rect x="812" y="819" width="2" height="2"/><rect x="817" y="819" width="2" height="2"/>
  <rect x="807" y="824" width="2" height="2"/><rect x="812" y="824" width="2" height="2"/><rect x="817" y="824" width="2" height="2"/>
  <path d="M828 818.500h6.500l-3.250 4zM889 818.500h6.500l-3.250 4zM924.500 818.500h6.500l-3.250 4zM984 818.500h6.500l-3.250 4zM1084 818.500h6.500l-3.250 4zM1123 818.500h6.500l-3.250 4z"/>
 </g>
 <g stroke="#e6e8ec" stroke-width="1.400" fill="none">
  <path d="M845.500 812v16.500h13M845.500 823h5.500v5.500"/>
  <circle cx="873" cy="820.500" r="6"/><path d="M873 820.500h9M873 820.500l7-7"/>
  <path d="M904.500 813l11 14" stroke="#c8a890"/><path d="M909.500 812v16" stroke="#4fd08c"/>
  <path d="M940 827h15M940 827l13-12" stroke="#f4f5f7"/>
  <rect x="964.500" y="815.500" width="12" height="12" stroke="#f4f5f7"/><rect x="962.500" y="813.500" width="4" height="4" stroke="#f4f5f7" fill="#6a8dbb" stroke-width="1"/>
  <path d="M1137.500 820h15.500M1145.200 812.500v15" stroke-width="2"/>
  <rect x="1162.500" y="812.500" width="5.500" height="5.500" stroke-width="1.200"/><circle cx="1174" cy="817.500" r="3" stroke-width="1.200"/><path d="M1168.500 821l3.500 6h-7z" stroke-width="1.200"/>
  <rect x="1236.500" y="813.500" width="14" height="12" stroke="#c8ccd4"/><path d="M1239.500 822.500l3-3M1239.500 822.500v-2.500M1239.500 822.500h2.500M1247.500 816.500l-3 3M1247.500 816.500v2.500M1247.500 816.500h-2.500" stroke-width="1"/>
  <path d="M1257.500 814.500h16M1257.500 820h16M1257.500 825.500h16" stroke-width="2"/>
 </g>
 <circle cx="940.500" cy="826.500" r="1.800" fill="#f4f5f7"/>
 <!-- annotation icons -->
 <g fill="#f2f3f6">
  <path d="M1006 812l2.500 8 4.500 7.500-4.500-3-2.500 4.500-2.500-4.500-4.500 3 4.500-7.500z"/>
  <path d="M1029 813l2.500 7.500 4.500 7.500-4.500-3-2.500 4-2.500-4-4.500 3 4.500-7.500z" fill="#dfe1e6"/>
  <path d="M1052 813l2.500 7.500 4.500 7.500-4.500-3-2.500 4-2.500-4-4.500 3 4.500-7.500z" fill="#dfe1e6"/>
  <path d="M1034 812l3.500 0-2.500 3.500h2.500l-4.500 4.500 1.500-4h-2z" fill="#dfe1e6"/>
 </g>
 <circle cx="1013.500" cy="814" r="2.200" fill="none" stroke="#f2f3f6" stroke-width="1"/>
 <!-- gear -->
 <g transform="translate(1107.500 819.500)"><circle r="4.300" fill="none" stroke="#eceef2" stroke-width="3.200"/><g stroke="#eceef2" stroke-width="2.600"><path d="M0-7.500v3M0 4.500v3M-7.500 0h3M4.500 0h3M-5.300-5.300l2 2M3.300 3.300l2 2M-5.300 5.300l2-2M3.300-3.300l2-2"/></g></g>
 <!-- workspace icon -->
 <rect x="1187" y="813" width="13" height="9" fill="#3f7fc0"/><path d="M1190.500 811v9M1186.500 815h13" stroke="#d8ecff" stroke-width="1"/><rect x="1186" y="821" width="7.500" height="6" fill="#e9a050"/><path d="M1193.500 823.500l3 3 5.500-6" stroke="#47b05a" stroke-width="2" fill="none"/>
 <rect x="1207.500" y="812.500" width="13" height="10" fill="#f4f4f4"/><path d="M1208.500 821l3.500-6 3 5 2-2.500 3 3.500" stroke="#5a6a80" stroke-width="1" fill="none"/><path d="M1219 819l4.500 8h-9z" fill="#e9a050"/><rect x="1218.600" y="821.500" width="1" height="3" fill="#fff"/>
</svg>

<!-- command line -->
<div class="a" style="left:388px;top:783px;width:506px;height:24px;background:#494c54"></div>
<div class="a" style="left:439px;top:783px;width:455px;height:24px;background:#fbfbfb"></div>
<div class="a" style="left:439px;top:783px;width:455px;height:8px;background:#b8babd"></div>
<svg style="left:388px;top:783px" width="506" height="24" viewBox="0 0 506 24">
 <g fill="#e4e4e4"><rect x="3" y="4" width="2" height="2"/><rect x="6" y="4" width="2" height="2"/><rect x="3" y="7" width="2" height="2"/><rect x="6" y="7" width="2" height="2"/><rect x="3" y="10" width="2" height="2"/><rect x="6" y="10" width="2" height="2"/><rect x="3" y="13" width="2" height="2"/><rect x="6" y="13" width="2" height="2"/><rect x="3" y="16" width="2" height="2"/><rect x="6" y="16" width="2" height="2"/><rect x="3" y="19" width="2" height="2"/><rect x="6" y="19" width="2" height="2"/></g>
 <path d="M13.500 6.500l8 8M21.500 6.500l-8 8" stroke="#f0f0f0" stroke-width="1.800"/>
 <path d="M32 19l7.500-7.500a4 4 0 0 1 5-5l-2.500 2.500 1.500 2 2.500-2.500a4 4 0 0 1-5 5L33.500 21z" fill="#f0f0f0"/>
 <rect x="55.500" y="6.500" width="15" height="11" fill="#fff" stroke="#444" stroke-width="1.200"/><path d="M58 10l2.500 2-2.500 2M62 14.500h4" stroke="#444" stroke-width="1" fill="none"/>
 <path d="M73 10h6l-3 3.500z" fill="#555"/>
 <path d="M496 13.500h6l-3-3.500z" fill="#666"/>
</svg>
<div class="t" style="left:473px;top:787px;font-size:12px;font-style:italic;color:#8c8f96">键入命令</div>

<div id="dlg" class="a">
<!-- coordinates inside dialog: abs - (427,238) because of 1px border -->
<div class="a" style="left:0;top:0;width:428px;height:26px;background:#fff"></div>
<div class="t" style="left:9px;top:4px;height:18px;line-height:18px;font-size:16px;font-weight:bold;color:#c9382c;font-family:'Liberation Sans',sans-serif">A</div>
<div class="t" style="left:26px;top:6px;font-family:'Liberation Sans','Noto Sans CJK SC',sans-serif;font-size:11px;color:#222">属性定义</div>
<svg style="left:409px;top:7px" width="11" height="11" viewBox="0 0 11 11"><path d="M0.500 0.500l9.500 9.500M10 0.500L0.500 10" stroke="#222" stroke-width="1.200"/></svg>
<!-- groups -->
<div class="grp" style="left:10px;top:42px;width:143px;height:121px"></div>
<div class="grp" style="left:10px;top:176px;width:143px;height:122px"></div>
<div class="grp" style="left:160px;top:42px;width:260px;height:90px"></div>
<div class="grp" style="left:160px;top:148px;width:261px;height:150px"></div>
<div class="t" style="left:16px;top:35px;background:#f0f0f0;padding:0 2px">模式</div>
<div class="t" style="left:16px;top:169px;background:#f0f0f0;padding:0 2px">插入点</div>
<div class="t" style="left:166px;top:35px;background:#f0f0f0;padding:0 2px">属性</div>
<div class="t" style="left:166px;top:140px;background:#f0f0f0;padding:0 2px">文字设置</div>
<!-- mode checkboxes -->
<div class="cb" style="left:18px;top:54px"></div><div class="t" style="left:32px;top:53px">不可见<span class="l">(I)</span></div>
<div class="cb" style="left:18px;top:72px"></div><div class="t" style="left:32px;top:71px">固定<span class="l">(C)</span></div>
<div class="cb" style="left:18px;top:90px"></div><div class="t" style="left:32px;top:89px">验证<span class="l">(V)</span></div>
<div class="cb" style="left:18px;top:108px"></div><div class="t" style="left:32px;top:107px">预设<span class="l">(P)</span></div>
<div class="cb" style="left:18px;top:126px"></div><div class="t" style="left:32px;top:125px">锁定位置<span class="l">(K)</span></div>
<div class="cb" style="left:18px;top:144px"></div><div class="t" style="left:32px;top:143px">多行<span class="l">(U)</span></div>
<svg style="left:18px;top:126px" width="12" height="12" viewBox="0 0 12 12"><path d="M2.500 6l2.500 2.500 4.500-5" stroke="#222" stroke-width="1.200" fill="none"/></svg>
<!-- insertion point -->
<div class="cb" style="left:19px;top:190px"></div><div class="t" style="left:33px;top:189px">在屏幕上指定<span class="l">(O)</span></div>
<svg style="left:19px;top:190px" width="12" height="12" viewBox="0 0 12 12"><path d="M2.500 6l2.500 2.500 4.500-5" stroke="#222" stroke-width="1.200" fill="none"/></svg>
<div class="t" style="left:20px;top:213px;color:#a0a0a0"><span class="l">X:</span></div>
<div class="t" style="left:20px;top:237px;color:#a0a0a0"><span class="l">Y:</span></div>
<div class="t" style="left:20px;top:263px;color:#a0a0a0"><span class="l">Z:</span></div>
<div class="inp" style="left:46px;top:212px;width:97px;height:19px;border-color:#c8c8c8;background:#f4f4f4;color:#8a8a8a">0</div>
<div class="inp" style="left:46px;top:235px;width:97px;height:19px;border-color:#c8c8c8;background:#f4f4f4;color:#8a8a8a">0</div>
<div class="inp" style="left:46px;top:260px;width:97px;height:19px;border-color:#c8c8c8;background:#f4f4f4;color:#8a8a8a">0</div>
<!-- attribute -->
<div class="t" style="left:171px;top:54px">标记<span class="l">(T):</span></div>
<div class="t" style="left:171px;top:78px">提示<span class="l">(M):</span></div>
<div class="t" style="left:171px;top:104px">默认<span class="l">(L):</span></div>
<div class="inp" style="left:235px;top:50px;width:169px;height:20px;border-color:#3c8ad8;box-shadow:inset 0 0 0 1px #cfe3f7"></div>
<div class="a" style="left:239px;top:53px;width:1px;height:13px;background:#000"></div>
<div class="inp" style="left:235px;top:76px;width:169px;height:20px"></div>
<div class="inp" style="left:235px;top:103px;width:144px;height:19px;border-color:#bdbdbd"></div>
<div class="btn" style="left:380px;top:104px;width:23px;height:18px"></div>
<svg style="left:383px;top:107px" width="17" height="12" viewBox="0 0 17 12"><rect x="5" y="1" width="11" height="9" fill="#dfeaf5" stroke="#2a5f9e" stroke-width="1.200"/><rect x="5" y="1" width="11" height="3" fill="#2a5f9e"/><path d="M1 7a4 4 0 0 1 6-4l-1 2M8 6a4 4 0 0 1-6 4l1-2" stroke="#2f9a3a" stroke-width="1.600" fill="none"/></svg>
<!-- text settings -->
<div class="t" style="left:168px;top:155px">对正<span class="l">(J):</span></div>
<div class="t" style="left:168px;top:178px">文字样式<span class="l">(S):</span></div>
<div class="cb" style="left:168px;top:198px"></div><div class="t" style="left:182px;top:198px">注释性<span class="l">(N)</span></div>
<div class="t" style="left:168px;top:218px">文字高度<span class="l">(E):</span></div>
<div class="t" style="left:168px;top:246px">旋转<span class="l">(R):</span></div>
<div class="t" style="left:168px;top:271px;color:#a0a0a0">边界宽度<span class="l">(W):</span></div>
<div class="btn" style="left:279px;top:153px;width:125px;height:19px;text-align:left;padding-left:3px;line-height:16px">左对齐</div>
<div class="btn" style="left:279px;top:176px;width:125px;height:19px;text-align:left;padding-left:3px;line-height:16px;letter-spacing:0.400px"><span class="l">Standard</span></div>
<svg style="left:390px;top:160px" width="10" height="30" viewBox="0 0 10 30"><path d="M1 1l4 4 4-4M1 24l4 4 4-4" stroke="#444" stroke-width="1.100" fill="none"/></svg>
<div class="inp" style="left:279px;top:215px;width:103px;height:20px">50</div>
<div class="inp" style="left:279px;top:243px;width:103px;height:20px">0</div>
<div class="inp" style="left:279px;top:271px;width:103px;height:19px;border-color:#d4d4d4;background:#f4f4f4;color:#8a8a8a">0</div>
<div class="btn" style="left:383px;top:215px;width:22px;height:21px"></div>
<div class="btn" style="left:383px;top:243px;width:22px;height:21px"></div>
<div class="btn" style="left:383px;top:271px;width:22px;height:21px;background:#cfcfcf;border-color:#c4c4c4"></div>
<svg style="left:383px;top:215px" width="22" height="78" viewBox="0 0 22 78">
 <g stroke="#333" stroke-width="1" fill="none"><circle cx="11" cy="10.500" r="2.500"/><path d="M11 4.500v4M11 12.500v4M5 10.500h4M13 10.500h4"/>
 <circle cx="11" cy="38.500" r="2.500"/><path d="M11 32.500v4M11 40.500v4M5 38.500h4M13 38.500h4"/></g>
 <g stroke="#9a9a9a" stroke-width="1" fill="none"><circle cx="11" cy="66.500" r="2.500"/><path d="M11 60.500v4M11 68.500v4M5 66.500h4M13 66.500h4"/></g>
</svg>
<!-- bottom -->
<div class="cb" style="left:19px;top:306px;border-color:#c4c4c4"></div><div class="t" style="left:33px;top:306px;color:#8e8e8e">在上一个属性定义下对齐<span class="l">(A)</span></div>
<div class="btn" style="left:171px;top:330px;width:68px;height:17px;border:2px solid #2f7fd6;line-height:12px">确定</div>
<div class="btn" style="left:252px;top:330px;width:68px;height:17px;line-height:14px">取消</div>
<div class="btn" style="left:344px;top:330px;width:68px;height:17px;line-height:14px">帮助<span class="l">(H)</span></div>
</div>
<!-- mouse cursor -->
<svg style="left:616px;top:394px" width="14" height="22" viewBox="0 0 14 22"><path d="M1 1v16l4-3.500 3 7 2.500-1-3-7h5z" fill="#fff" stroke="#222" stroke-width="1"/></svg>

</body>
</html>
